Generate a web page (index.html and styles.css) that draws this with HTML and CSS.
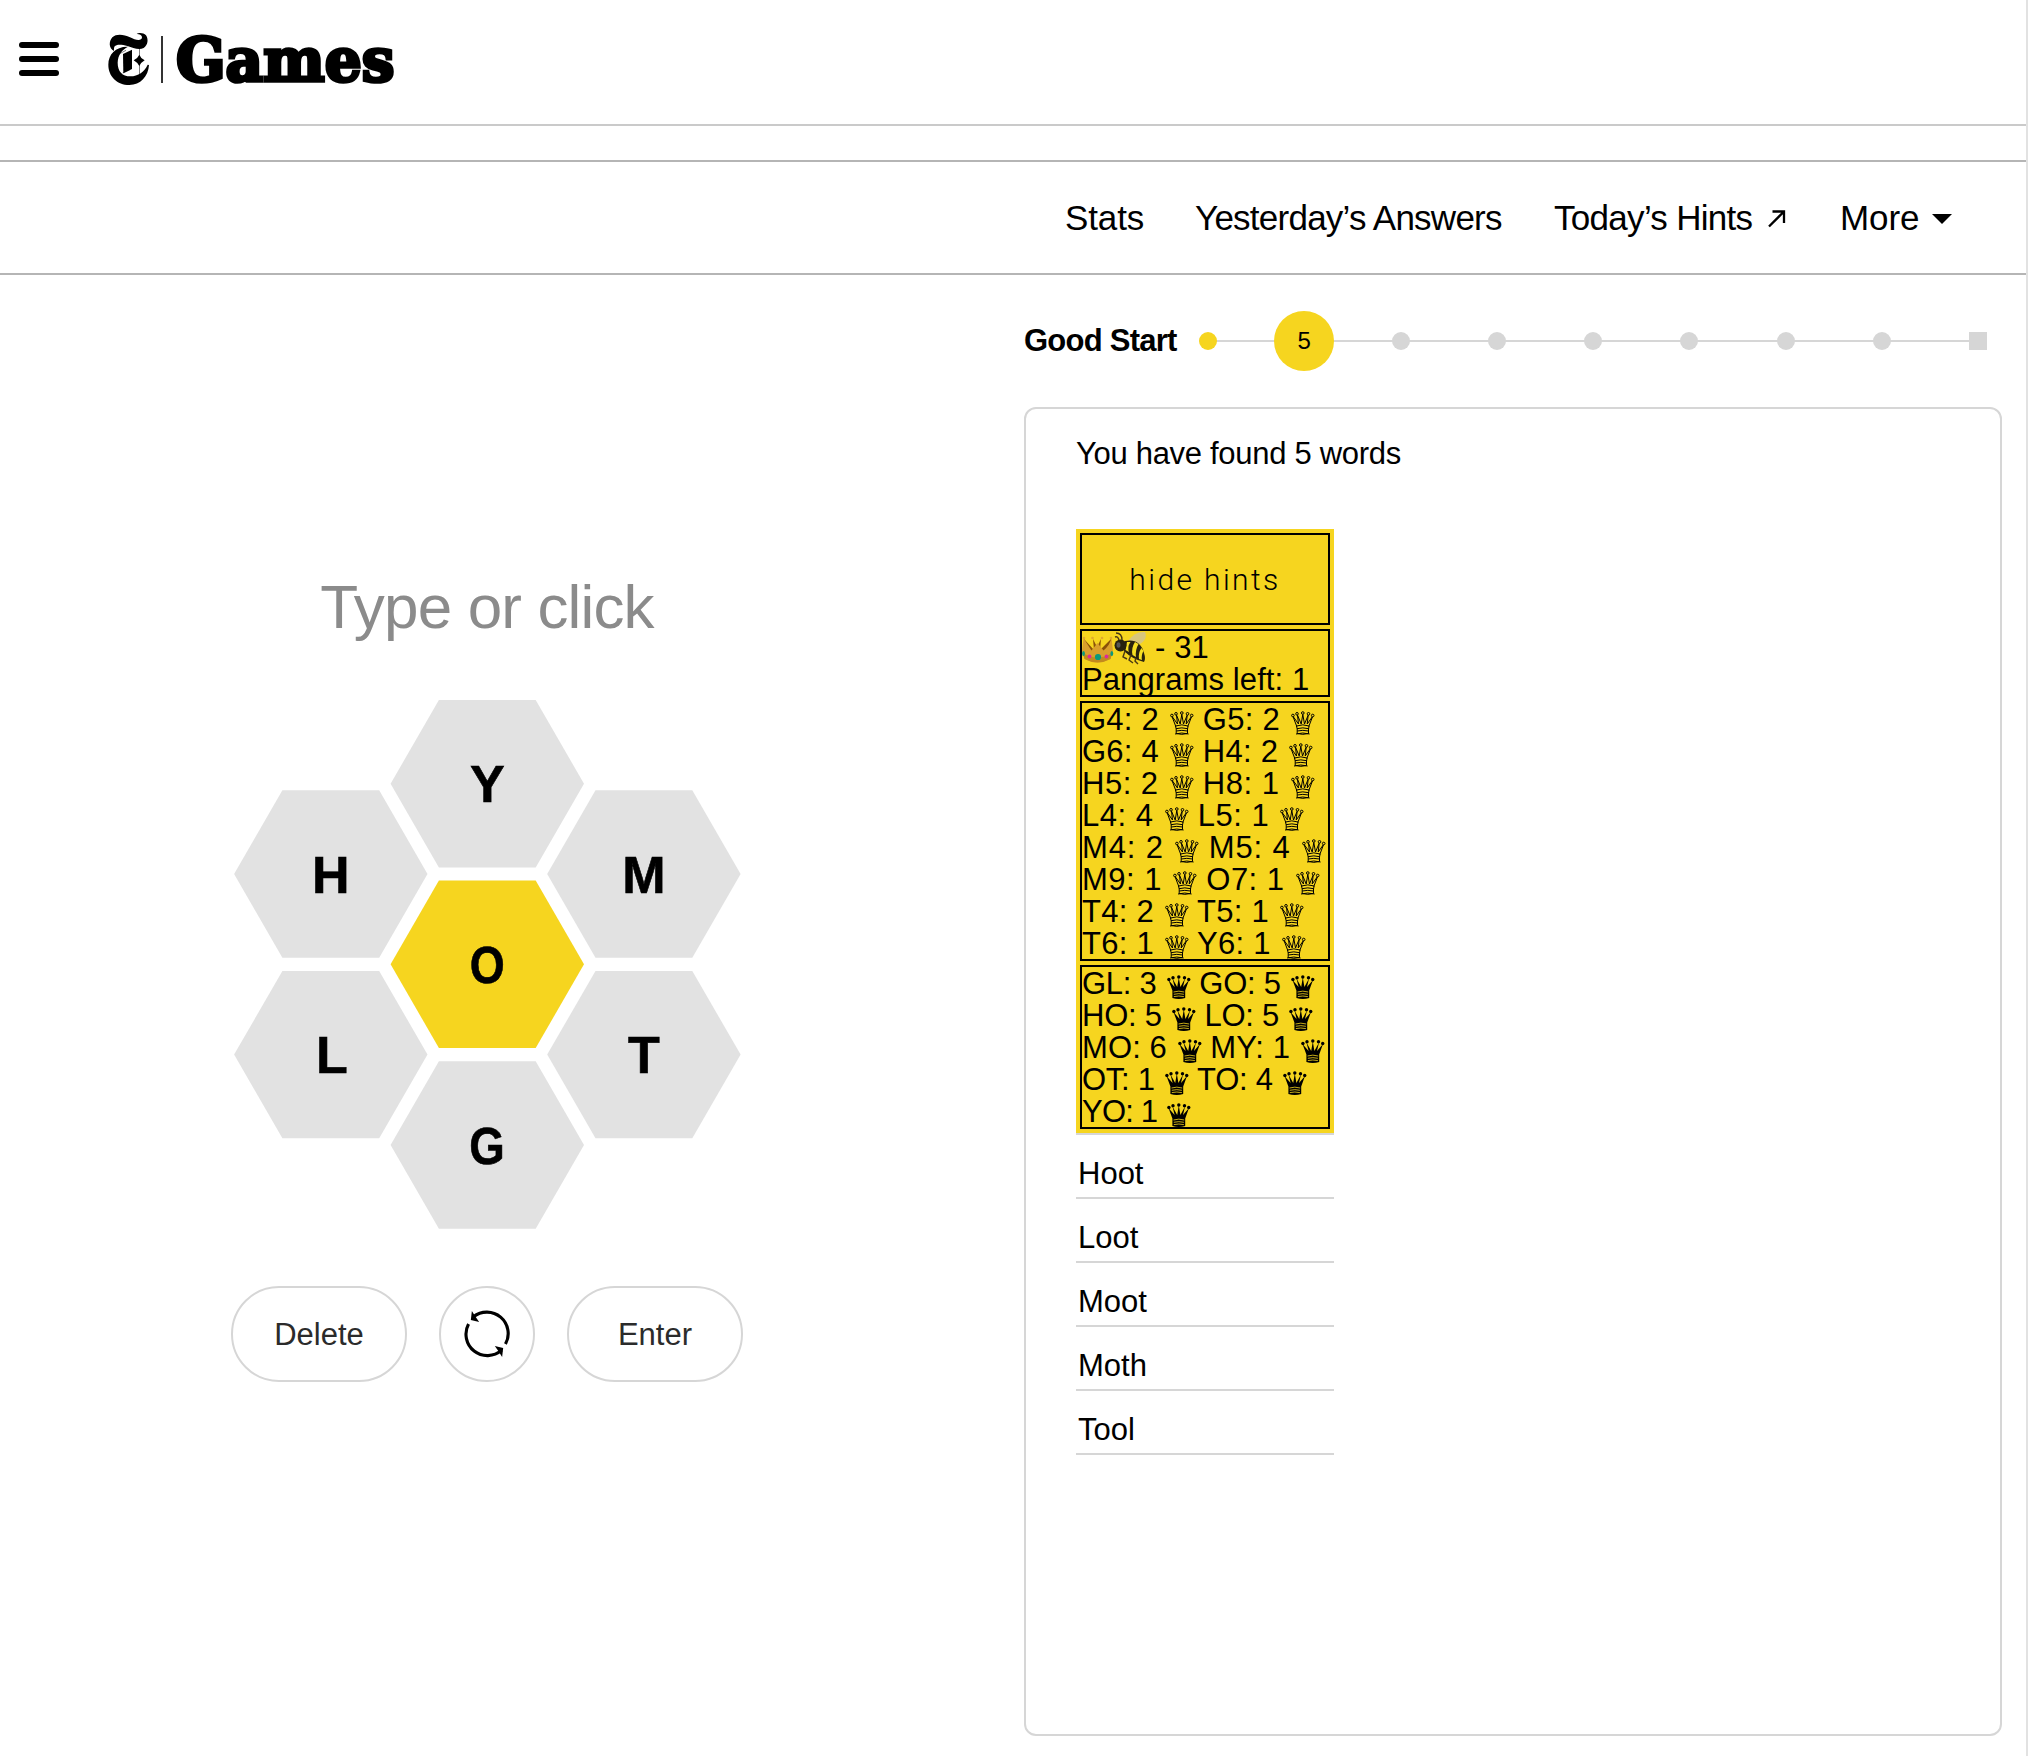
FILE: index.html
```html
<!DOCTYPE html>
<html lang="en">
<head>
<meta charset="utf-8">
<title>Spelling Bee</title>
<link rel="stylesheet" href="styles.css">
</head>
<body>
<svg class="defs" width="0" height="0">
  <symbol id="queen-open" viewBox="0 0 24 24">
    <g fill="none" stroke="#000" stroke-width="1">
      <circle cx="1.900" cy="4.500" r="1.300"/><circle cx="6" cy="2.800" r="1.300"/><circle cx="11.800" cy="2" r="1.300"/><circle cx="17.500" cy="2.800" r="1.300"/><circle cx="21.700" cy="4.500" r="1.300"/>
      <path d="M2.200 6L5.800 15.500M21.400 6L17.800 15.500M2.500 6L7.500 13L6.500 4.200L10.200 13L11.800 3.500L13.500 13L17.200 4.200L16.200 13L21.200 6"/>
      <path d="M5.500 15Q11.800 12.700 18.100 15L17.500 18V22.500Q11.800 24.200 6.200 22.500V18ZM6 17.700Q11.800 16 17.600 17.700M6.200 20Q11.800 18.700 17.500 20M5 23Q11.800 21 18.600 23"/>
    </g>
  </symbol>
  <symbol id="queen-solid" viewBox="0 0 24 24">
    <circle cx="1.900" cy="4.500" r="1.700"/><circle cx="6" cy="2.800" r="1.700"/><circle cx="11.800" cy="2" r="1.700"/><circle cx="17.500" cy="2.800" r="1.700"/><circle cx="21.700" cy="4.500" r="1.700"/>
    <path d="M1.500 5L7.600 12L5.500 3.500L10.200 12L11.800 2.500L13.400 12L18 3.500L16 12L22 5L18.200 15.500V23Q11.800 25 5.400 23V15.500Z"/>
    <path d="M6.500 17Q11.800 15.300 17.200 17M6.800 19.300Q11.800 18 16.900 19.300M6.800 21.600Q11.800 20.400 16.900 21.600" fill="none" stroke="#f6d51f" stroke-width=".8"/>
  </symbol>
</svg>
<div class="page">
  <header class="masthead">
    <svg class="menu" viewBox="0 0 40 34"><rect width="40" height="6" rx="3"/><rect y="14" width="40" height="6" rx="3"/><rect y="28" width="40" height="6" rx="3"/></svg>
    <svg class="logo" viewBox="324 96 864 162">
      <path d="M342 153C326 146 326 124 337 112C349 100 372 103 390 112C404 119 417 123 424 117C430 110 422 101 410 102C416 97 431 98 438 106C446 117 444 136 431 144C416 151 399 143 382 138C366 133 349 132 344 139C341 144 342 149 342 153Z"/>
      <path d="M384 140C366 149 354 164 353 188C353 214 367 229 391 229C414 229 434 215 443 194L447 195C445 229 421 255 388 255C351 255 325 229 325 194C325 163 347 139 384 140Z"/>
      <path d="M369 162L396 149V207L370 220Z"/>
      <path d="M418 164Q422 175 434 181Q422 188 418 198Q413 188 401 181Q413 175 418 164Z"/>
      <path class="hair" d="M418.500 146V226M357 162L378 151M368 219L390 209"/>
      <rect x="483" y="108" width="6" height="141" fill="#333"/>
      <text class="wordmark" x="528" y="244" textLength="655" lengthAdjust="spacingAndGlyphs">Games</text>
    </svg>
  </header>
  <nav class="toolbar">
    <span class="stats">Stats</span>
    <span class="yesterday">Yesterday’s Answers</span>
    <span class="today">Today’s Hints</span>
    <svg class="ext" viewBox="0 0 18 18"><path d="M1 16.500L15.500 2M4.500 1.500H16V13" fill="none" stroke="#000" stroke-width="2.300"/></svg>
    <span class="more">More</span>
    <svg class="caret" viewBox="0 0 20 10"><path d="M0 0H20L10 10Z"/></svg>
  </nav>
  <main class="game">
    <section class="play">
      <div class="prompt">Type or click</div>
      <svg class="hive" viewBox="234 699 508 531">
        <defs><path id="cell" d="M-96.700 0L-48.400 -83.700H48.400L96.700 0L48.400 83.700H-48.400Z"/></defs>
        <g fill="#e2e2e2">
          <use href="#cell" x="487.300" y="783.700"/><use href="#cell" x="330.800" y="874"/><use href="#cell" x="643.900" y="874"/>
          <use href="#cell" x="330.800" y="1054.600"/><use href="#cell" x="643.900" y="1054.600"/><use href="#cell" x="487.300" y="1145"/>
        </g>
        <use href="#cell" x="487.300" y="964.300" fill="#f6d51f"/>
        <g class="letters">
          <text x="487.300" y="802.300">Y</text><text x="330.800" y="892.500">H</text><text x="643.900" y="892.500">M</text><text x="469.800" y="983" textLength="35" lengthAdjust="spacingAndGlyphs" class="fit">O</text>
          <text x="332" y="1073.300">L</text><text x="643.900" y="1073.300">T</text><text x="469.300" y="1163.500" textLength="35.500" lengthAdjust="spacingAndGlyphs" class="fit">G</text>
        </g>
      </svg>
      <div class="actions">
        <button class="pill">Delete</button>
        <button class="round"><svg viewBox="0 0 46 46" fill="none" stroke="#000" stroke-width="3"><path d="M5.300 13.500A20.500 20.500 0 0 0 37 38.500M40.700 32.500A20.500 20.500 0 0 0 10 6.500"/><path d="M8.500 1L7.500 9.500L15.500 11.500L12 6.500ZM37.500 45L38.500 36.500L30.500 34.500L34 39.500Z" fill="#000" stroke="none"/></svg></button>
        <button class="pill">Enter</button>
      </div>
    </section>
    <section class="status">
      <div class="rank">
        <strong class="rank-name">Good Start</strong>
        <div class="track"><i class="dot done"></i><i class="dot now"><b>5</b></i><i class="dot"></i><i class="dot"></i><i class="dot"></i><i class="dot"></i><i class="dot"></i><i class="dot"></i><i class="dot last"></i></div>
      </div>
      <div class="panel">
        <div class="found">You have found 5 words</div>
        <div class="hints">
          <button class="hide">hide hints</button>
          <div class="cell totals">
            <div class="row tally"><svg class="emoji" viewBox="0 0 64 34">
              <path d="M2 8L12 19L11 8L15 16L19 8L18 19L29 8L28 24H3Z" fill="#8a5208"/>
              <path d="M1.500 7Q9 19 9.500 19.500L15.500 12L21.500 19.500Q28 14 29.500 7L31 20L28.500 28Q15.500 35 2.500 28L0 20Z" fill="#d9a02c"/>
              <path d="M1 22Q15 31 30 22L28.500 28Q15.500 35 2.500 28Z" fill="#c28a1e"/>
              <g fill="#e0a92f"><circle cx="2" cy="7" r="1.300"/><circle cx="10.500" cy="7" r="1.300"/><circle cx="20" cy="7" r="1.300"/><circle cx="29" cy="7" r="1.300"/></g>
              <g fill="#db2b9b"><circle cx="7.500" cy="25.500" r="1.900"/><circle cx="24.500" cy="25.500" r="1.900"/></g><g fill="#0b9a7c"><circle cx="16" cy="26" r="3.100"/><ellipse cx="1.500" cy="22.500" rx="1.400" ry="2.500"/><ellipse cx="29.800" cy="22.500" rx="1.400" ry="2.500"/></g>
              <path d="M46 10Q53 0 63 1Q66 8 58 13Z" fill="#d8c67c"/>
              <path d="M43 10Q58 7 62 22Q64 28 62 31Q50 28 42 20Z" fill="#29230e"/>
              <path d="M45 11L48.500 11Q45 16 47 21L43.500 19ZM53 11L56.500 13Q53 19 54 26L50.500 24Q49 17 53 11ZM59.500 17L61.500 20Q59 24 60 29L57 28Q56 22 59.500 17Z" fill="#f6df22"/>
              <circle cx="38.500" cy="14.500" r="6" fill="#26220f"/><ellipse cx="36.500" cy="14" rx="2" ry="2.800" fill="#555"/>
              <path d="M40 9Q40 2 34 2M37 9Q36 5 33 6M43 20L41 26L45 28M49 24L47 29L51 32M54 27L53 30L56 33" fill="none" stroke="#493813" stroke-width="1.400"/>
            </svg><span class="total">- 31</span></div>
            <div class="row">Pangrams left: 1</div>
          </div>
          <div class="cell lengths">
            <div class="row">G4: 2 <svg class="q"><use href="#queen-open"/></svg> G5: 2 <svg class="q"><use href="#queen-open"/></svg></div>
            <div class="row">G6: 4 <svg class="q"><use href="#queen-open"/></svg> H4: 2 <svg class="q"><use href="#queen-open"/></svg></div>
            <div class="row loose">H5: 2 <svg class="q"><use href="#queen-open"/></svg> H8: 1 <svg class="q"><use href="#queen-open"/></svg></div>
            <div class="row loose">L4: 4 <svg class="q"><use href="#queen-open"/></svg> L5: 1 <svg class="q"><use href="#queen-open"/></svg></div>
            <div class="row looser">M4: 2 <svg class="q"><use href="#queen-open"/></svg> M5: 4 <svg class="q"><use href="#queen-open"/></svg></div>
            <div class="row loose">M9: 1 <svg class="q"><use href="#queen-open"/></svg> O7: 1 <svg class="q"><use href="#queen-open"/></svg></div>
            <div class="row">T4: 2 <svg class="q"><use href="#queen-open"/></svg> T5: 1 <svg class="q"><use href="#queen-open"/></svg></div>
            <div class="row">T6: 1 <svg class="q"><use href="#queen-open"/></svg> Y6: 1 <svg class="q"><use href="#queen-open"/></svg></div>
          </div>
          <div class="cell pairs">
            <div class="row">GL: 3 <svg class="q"><use href="#queen-solid"/></svg> GO: 5 <svg class="q"><use href="#queen-solid"/></svg></div>
            <div class="row">HO: 5 <svg class="q"><use href="#queen-solid"/></svg> LO: 5 <svg class="q"><use href="#queen-solid"/></svg></div>
            <div class="row even">MO: 6 <svg class="q"><use href="#queen-solid"/></svg> MY: 1 <svg class="q"><use href="#queen-solid"/></svg></div>
            <div class="row">OT: 1 <svg class="q"><use href="#queen-solid"/></svg> TO: 4 <svg class="q"><use href="#queen-solid"/></svg></div>
            <div class="row tight">YO: 1 <svg class="q"><use href="#queen-solid"/></svg></div>
          </div>
        </div>
        <ul class="words"><li>Hoot</li><li>Loot</li><li>Moot</li><li>Moth</li><li>Tool</li></ul>
      </div>
    </section>
  </main>
</div>
</body>
</html>
```
FILE: styles.css
```css
* { box-sizing: border-box; }
body { margin: 0; background: #fff; color: #000; font-family: "Liberation Sans", Arial, sans-serif; }
button { font-family: inherit; padding: 0; background: none; color: inherit; }
.defs { position: absolute; }
.page { width: 2028px; height: 1756px; border-right: 2px solid #e2e2e2; overflow: hidden; }
.masthead { height: 126px; border-bottom: 2px solid #cacaca; display: flex; align-items: flex-start; }
.menu { width: 40px; height: 34px; margin: 42px 49px 0 19px; }
.logo { width: 288px; height: 54px; margin-top: 32px; overflow: visible; }
.hair { fill: none; stroke: #000; stroke-width: 1.5; }
.wordmark { font: bold 182px "DejaVu Serif", serif; stroke: #000; stroke-width: 11px; }
.toolbar { margin-top: 34px; height: 115px; border-top: 2px solid #b5b5b5; border-bottom: 2px solid #b5b5b5; display: flex; align-items: center; font-size: 35px; white-space: nowrap; padding: 1px 0 0 1065px; }
.toolbar span { flex: none; }
.stats { width: 130px; letter-spacing: -0.1px; }
.yesterday { width: 359px; letter-spacing: -0.75px; }
.today { width: 214px; letter-spacing: -0.7px; }
.ext { width: 18px; height: 18px; margin-top: 2px; }
.more { width: 80px; margin-left: 54px; letter-spacing: -0.1px; }
.caret { width: 20px; height: 10px; margin: 2px 0 0 12px; }
.game { display: flex; }
.play { width: 1024px; padding-top: 292px; }
.prompt { width: 974px; height: 80px; line-height: 80px; text-align: center; font-size: 62px; letter-spacing: -0.85px; color: #8b8b8b; }
.hive { display: block; width: 508px; height: 531px; margin: 52px 0 0 234px; }
.letters { font-size: 52px; font-weight: bold; text-anchor: middle; stroke: #000; stroke-width: 0.6px; }
.fit { text-anchor: start; }
.actions { display: flex; margin: 56px 0 0 231px; gap: 32px; }
.pill, .round { height: 96px; border: 2px solid #d6d6d6; border-radius: 48px; font-size: 31px; color: #2b2b2b; }
.pill { width: 176px; padding-top: 2px; }
.round { width: 96px; display: flex; align-items: center; justify-content: center; }
.round svg { width: 48px; height: 48px; }
.status { width: 978px; }
.rank { height: 132px; display: flex; align-items: center; }
.rank-name { width: 175px; font-size: 31px; letter-spacing: -0.75px; white-space: nowrap; }
.track { width: 788px; height: 60px; display: flex; align-items: center; justify-content: space-between; background: linear-gradient(#d6d6d6, #d6d6d6) 9px 29px / 770px 2px no-repeat; }
.dot { width: 18px; height: 18px; border-radius: 50%; background: #d6d6d6; font-style: normal; }
.done { background: #f6d51f; }
.now { width: 60px; height: 60px; margin: 0 -21px; background: #f6d51f; display: flex; align-items: center; justify-content: center; }
.now b { font-size: 24px; font-weight: normal; }
.last { border-radius: 0; }
.panel { height: 1329px; border: 2px solid #d6d6d6; border-radius: 12px; padding: 27px 50px; }
.found { height: 36px; line-height: 36px; font-size: 31px; letter-spacing: -0.3px; white-space: nowrap; }
.hints { width: 258px; margin-top: 57px; padding: 4px; display: flex; flex-direction: column; gap: 4px; background: #f6d51f; border-bottom: 2px solid #d6d6d6; height: 606px; }
.hide { height: 92px; flex: none; border: 2px solid #000; font: 300 30px Roboto, sans-serif; letter-spacing: 2.4px; }
.cell { border: 2px solid #000; }
.row { height: 32px; line-height: 34px; font-size: 31px; white-space: nowrap; }
.totals { letter-spacing: 0.1px; }
.tally { display: flex; }
.lengths { letter-spacing: 0.25px; }
.loose { letter-spacing: 0.5px; }
.looser { letter-spacing: 0.85px; }
.pairs { letter-spacing: -0.25px; }
.even { letter-spacing: 0.1px; }
.tight { letter-spacing: -0.8px; }
.emoji { width: 64px; height: 34px; flex: none; }
.total { margin-left: 9px; }
.q { display: inline-block; width: 24px; height: 24px; margin: 8px 0 0 2px; vertical-align: top; }
.words { width: 258px; list-style: none; margin: 0; padding: 0; }
.words li { height: 64px; padding: 20px 0 0 2px; line-height: 38px; font-size: 31px; border-bottom: 2px solid #d6d6d6; }
```
